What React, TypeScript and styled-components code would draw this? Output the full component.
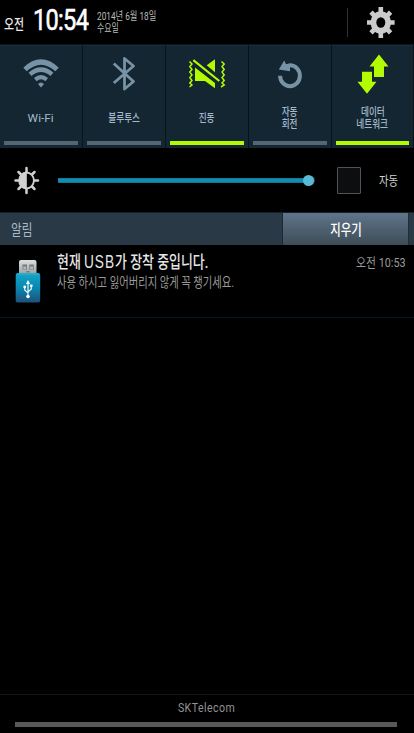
import React from "react";
import styled, { createGlobalStyle } from "styled-components";

const GlobalStyle = createGlobalStyle`
  * { box-sizing: border-box; }
  html, body { margin: 0; background: #000; overflow: hidden; }
`;

const Screen = styled.main`
  display: flex;
  flex-direction: column;
  width: 414px;
  height: 733px;
  background: #000;
  font-family: Roboto, "Noto Sans CJK KR", sans-serif;
`;

/* Condensed line of text; the glyphs are narrowed by the squeeze factor. */
const Text = styled.span<{
  $size: number;
  $line: number;
  $squeeze: number;
  $color: string;
  $weight?: number;
  $origin?: string;
  $spacing?: number;
}>`
  display: block;
  flex: none;
  white-space: nowrap;
  font-size: ${(p) => p.$size}px;
  line-height: ${(p) => p.$line}px;
  font-weight: ${(p) => p.$weight ?? 400};
  letter-spacing: ${(p) => p.$spacing ?? 0}px;
  color: ${(p) => p.$color};
  transform: scaleX(${(p) => p.$squeeze});
  transform-origin: ${(p) => p.$origin ?? "left"} center;
`;

/* Latin run inside a Korean title, set wider and lighter. */
const Latin = styled.span`
  font-family: "Liberation Sans", sans-serif;
  font-weight: 400;
  font-size: 18px;
  line-height: 1;
  letter-spacing: 1.3px;
`;

const Header = styled.header`
  display: flex;
  height: 44px;
`;

const Meridiem = styled.div`
  width: 30px;
  padding: 16px 0 0 4px;
`;

const Clock = styled.div`
  width: 67px;
  padding: 2px 0 0 3px;
  -webkit-text-stroke: 0.6px #fff;
`;

const DateBlock = styled.div`
  width: 250px;
  padding-top: 11px;
`;

const HeaderRule = styled.div`
  width: 1px;
  height: 29px;
  margin-top: 8px;
  background: #29343b;
`;

const SettingsButton = styled.div`
  margin: 7px 0 0 18px;
  svg { display: block; }
`;

const Toggles = styled.section`
  display: flex;
  height: 104px;
  border-top: 1px solid #0a161d;
`;

const Toggle = styled.div`
  display: flex;
  flex: none;
  flex-direction: column;
  width: 83px;
  padding: 7px 4px 0;
  background: #132631;
  border-right: 1px solid #08131a;
  box-shadow: inset 0 1px #182e3a;
  &:last-child { width: 82px; }
`;

const ToggleIcon = styled.div`
  display: flex;
  justify-content: center;
  height: 44px;
  svg { display: block; }
`;

const ToggleLabel = styled.div`
  display: flex;
  flex-direction: column;
  align-items: center;
  justify-content: center;
  height: 42px;
  padding-top: 2px;
`;

const ToggleBar = styled.div<{ $on: boolean }>`
  height: 4px;
  margin-top: 3px;
  background: ${(p) => (p.$on ? "#b2fb00" : "#526673")};
`;

const Brightness = styled.section`
  display: flex;
  align-items: center;
  height: 64px;
  padding-left: 13px;
`;

const Track = styled.div`
  display: flex;
  align-items: center;
  justify-content: flex-end;
  width: 256px;
  height: 5px;
  margin-left: 18px;
  background: linear-gradient(#097793, #118daf 25%, #118daf 75%, #096a82);
`;

const Thumb = styled.div`
  flex: none;
  width: 11px;
  height: 11px;
  border-radius: 50%;
  background: #58bad5;
  box-shadow: 2px 0 0 -1px #33484f;
`;

const AutoBox = styled.div`
  width: 24px;
  height: 27px;
  margin: 0 18px 0 23px;
  border: 1px solid #50545a;
  border-radius: 1px;
  background: #0c0e10;
`;

const AutoLabel = styled.div`
  padding-top: 2px;
`;

const NoticeBar = styled.section`
  display: flex;
  justify-content: space-between;
  height: 33px;
  padding: 0 5px 0 11px;
  background: #2a3946;
  border-top: 1px solid #14212a;
`;

const ClearButton = styled.div`
  display: flex;
  justify-content: center;
  width: 127px;
  height: 32px;
  padding-left: 1px;
  border-left: 1px solid #1c2933;
  border-right: 1px solid #202d37;
  background: linear-gradient(#60758b, #3d4c56);
`;

const Notice = styled.article`
  display: flex;
  height: 73px;
  border-bottom: 1px solid #071722;
`;

const NoticeIcon = styled.div`
  width: 57px;
  padding: 14px 0 0 14px;
  svg { display: block; }
`;

const NoticeBody = styled.div`
  flex: 1;
  width: 0;
  padding-top: 6px;
`;

const NoticeTime = styled.div`
  padding: 10px 8px 0 0;
`;

const Footer = styled.footer`
  display: flex;
  flex-direction: column;
  align-items: center;
  height: 39px;
  margin-top: auto;
  padding-top: 5px;
  border-top: 1px solid #171717;
`;

const Handle = styled.div`
  width: 382px;
  height: 5px;
  margin: 5px 2px 0 0;
  background: #585858;
`;

const GREEN = "#b2fb00";
const STEEL = "#7893a5";

const GearIcon = () => (
  <svg width="29" height="31" viewBox="0 0 29 31">
    <g stroke="#cbcbcb" strokeWidth="4.6">
      <path d="M14.8 0V31M1 15.5H28.6M5 5.2L24.6 25.8M24.6 5.2L5 25.8" />
    </g>
    <ellipse cx="14.8" cy="15.5" rx="10.2" ry="11.2" fill="#cbcbcb" />
    <ellipse cx="14.8" cy="15.5" rx="4.5" ry="5.2" fill="#000" />
  </svg>
);

const WifiIcon = () => (
  <svg width="36" height="44" viewBox="0 0 36 44" fill="none" stroke={STEEL} strokeWidth="4.4">
    <path d="M2 17.5Q18 2.5 34 17.5" strokeWidth="5" />
    <path d="M7 22.2Q18 13 29 22.2" />
    <path d="M12.3 27.6Q18 22.6 23.7 27.6" strokeWidth="4.1" />
    <path d="M15 32Q18 29 21 32L18 35.5Z" fill={STEEL} stroke="none" />
  </svg>
);

const BluetoothIcon = () => (
  <svg width="24" height="44" viewBox="0 0 24 44" fill="none" stroke={STEEL} strokeWidth="2.8" strokeLinejoin="round">
    <path d="M1.8 11.5L21.5 29.5L12.5 37V6.5L21.5 14L1.8 31" />
  </svg>
);

const VibrateIcon = () => (
  <svg width="38" height="44" viewBox="0 0 38 44">
    <g fill={GREEN}>
      <path d="M7 15.5L27 31V36.3L17 29H7Z" />
      <path d="M18.7 13.3L27 7.3V20.3Z" />
    </g>
    <g fill="none" stroke={GREEN}>
      <path d="M5.3 8.2L31.3 29" strokeWidth="2.2" />
      <path
        d="M1.5 9.5L4 12L1.8 14.5L4 17.5L1.8 20L4 23L1.8 25.5L4 28.5L1.8 31L4 33L1.5 35M33.5 9.5L36.2 12L34 14.5L36.2 17.5L34 20L36.2 23L34 25.5L36.2 28.5L34 31L36.2 33L33 35"
        strokeWidth="1.5"
      />
    </g>
  </svg>
);

const RotateIcon = () => (
  <svg width="26" height="44" viewBox="0 0 26 44">
    <path d="M3.1 23.7A9.9 10.5 0 1 0 13 13.2L9 14.4" fill="none" stroke={STEEL} strokeWidth="4" />
    <path d="M1.8 17.6L7.3 8.5L8.8 12L13 13L13 19.2Z" fill={STEEL} />
  </svg>
);

const DataIcon = () => (
  <svg width="32" height="44" viewBox="0 0 32 44" fill={GREEN}>
    <path d="M22 2.5L31.5 14.5H27V25H17V14.5H12.5Z" />
    <path d="M5 19.8H15V29.8H19.5L10 41.8L.5 29.8H5Z" />
  </svg>
);

const BrightnessIcon = () => (
  <svg width="27" height="29" viewBox="0 0 27 29">
    <path d="M13.5 2V7M13.5 22V27M2.5 14.5H7M20 14.5H25M5.5 6L8.5 9M18.5 20L21.5 23M21.5 6L18.5 9M8.5 20L5.5 23" stroke="#d0d0d0" strokeWidth="2.5" strokeLinecap="round" />
    <ellipse cx="13.5" cy="14.5" rx="7.4" ry="8" fill="#000" stroke="#d0d0d0" strokeWidth="1.8" />
    <path d="M13.8 6.5A7.3 8 0 0 0 13.8 22.5Z" fill="#d0d0d0" />
  </svg>
);

const UsbIcon = () => (
  <svg width="28" height="46" viewBox="0 0 28 46">
    <defs>
      <linearGradient id="metal" x1="0" y1="0" x2="0" y2="1">
        <stop stopColor="#dedede" />
        <stop offset="1" stopColor="#929ba0" />
      </linearGradient>
      <linearGradient id="casing" x1="0" y1="0" x2="0" y2="1">
        <stop stopColor="#15a6c9" />
        <stop offset=".5" stopColor="#0787b2" />
        <stop offset="1" stopColor="#205078" />
      </linearGradient>
    </defs>
    <rect x="5" y="1" width="17.5" height="16" rx="2" fill="url(#metal)" />
    <path d="M8.5 5.5H13V10.5H8.5ZM15.3 5.5H19.8V10.5H15.3Z" fill="#737b80" />
    <path d="M9.3 7.5H12.2V10H9.3ZM16.1 7.5H19V10H16.1Z" fill="#b2b8bb" />
    <path d="M12.4 12H15.6V13.5H12.4Z" fill="#737b80" />
    <rect x="1.7" y="14" width="24.5" height="29.5" rx="2" fill="url(#casing)" />
    <path d="M4 15H24" stroke="#45b0cb" strokeWidth="1" />
    <path d="M14 24V38M10.7 28V31L14 34M17.3 27V30L14 33" stroke="#e9f3f6" strokeWidth="1.2" fill="none" />
    <path d="M14 21L16 25H12ZM16.1 25.5H18.5V28H16.1Z" fill="#fff" />
    <circle cx="10.7" cy="28" r="1.4" fill="#fff" />
    <circle cx="14" cy="37.5" r="1.8" fill="#fff" />
  </svg>
);

const toggles = [
  { lines: ["Wi-Fi"], icon: <WifiIcon />, on: false, squeeze: 1.03, weight: 400 },
  { lines: ["블루투스"], icon: <BluetoothIcon />, on: false, squeeze: 0.75, weight: 500 },
  { lines: ["진동"], icon: <VibrateIcon />, on: true, squeeze: 0.75, weight: 500 },
  { lines: ["자동", "회전"], icon: <RotateIcon />, on: false, squeeze: 0.75, weight: 500 },
  { lines: ["데이터", "네트워크"], icon: <DataIcon />, on: true, squeeze: 0.75, weight: 500 },
];

export default function App() {
  return (
    <>
      <GlobalStyle />
      <Screen>
        <Header>
          <Meridiem>
            <Text $size={14} $line={16} $squeeze={0.78} $color="#e8e8e8" $weight={500}>오전</Text>
          </Meridiem>
          <Clock>
            <Text $size={29.5} $line={36} $squeeze={0.8} $color="#fff" $spacing={-0.9}>10:54</Text>
          </Clock>
          <DateBlock>
            <Text $size={11} $line={12} $squeeze={0.75} $color="#bcbcbc">2014년 6월 18일</Text>
            <Text $size={11} $line={12} $squeeze={0.72} $color="#bcbcbc">수요일</Text>
          </DateBlock>
          <HeaderRule />
          <SettingsButton><GearIcon /></SettingsButton>
        </Header>
        <Toggles>
          {toggles.map((t) => (
            <Toggle key={t.lines[0]}>
              <ToggleIcon>{t.icon}</ToggleIcon>
              <ToggleLabel>
                {t.lines.map((line) => (
                  <Text key={line} $size={11.5} $line={12.5} $squeeze={t.squeeze} $color="#a5b9cc" $weight={t.weight} $origin="center">{line}</Text>
                ))}
              </ToggleLabel>
              <ToggleBar $on={t.on} />
            </Toggle>
          ))}
        </Toggles>
        <Brightness>
          <BrightnessIcon />
          <Track><Thumb /></Track>
          <AutoBox />
          <AutoLabel>
            <Text $size={13} $line={16} $squeeze={0.8} $color="#d0d0d0">자동</Text>
          </AutoLabel>
        </Brightness>
        <NoticeBar>
          <Text $size={14.5} $line={35} $squeeze={0.8} $color="#a9bbcc">알림</Text>
          <ClearButton>
            <Text $size={14.5} $line={35} $squeeze={0.79} $color="#fff" $weight={500} $origin="center">지우기</Text>
          </ClearButton>
        </NoticeBar>
        <Notice>
          <NoticeIcon><UsbIcon /></NoticeIcon>
          <NoticeBody>
            <Text $size={17} $line={23} $squeeze={0.76} $color="#e6e6e6" $weight={500}>
              현재 <Latin>USB</Latin>가 장착 중입니다.
            </Text>
            <Text $size={13.5} $line={17} $squeeze={0.765} $color="#999">사용 하시고 잃어버리지 않게 꼭 챙기세요.</Text>
          </NoticeBody>
          <NoticeTime>
            <Text $size={13} $line={16} $squeeze={0.83} $color="#999" $origin="right">오전 10:53</Text>
          </NoticeTime>
        </Notice>
        <Footer>
          <Text $size={12} $line={17} $squeeze={0.88} $color="#929292" $origin="center" $spacing={0.5}>SKTelecom</Text>
          <Handle />
        </Footer>
      </Screen>
    </>
  );
}
